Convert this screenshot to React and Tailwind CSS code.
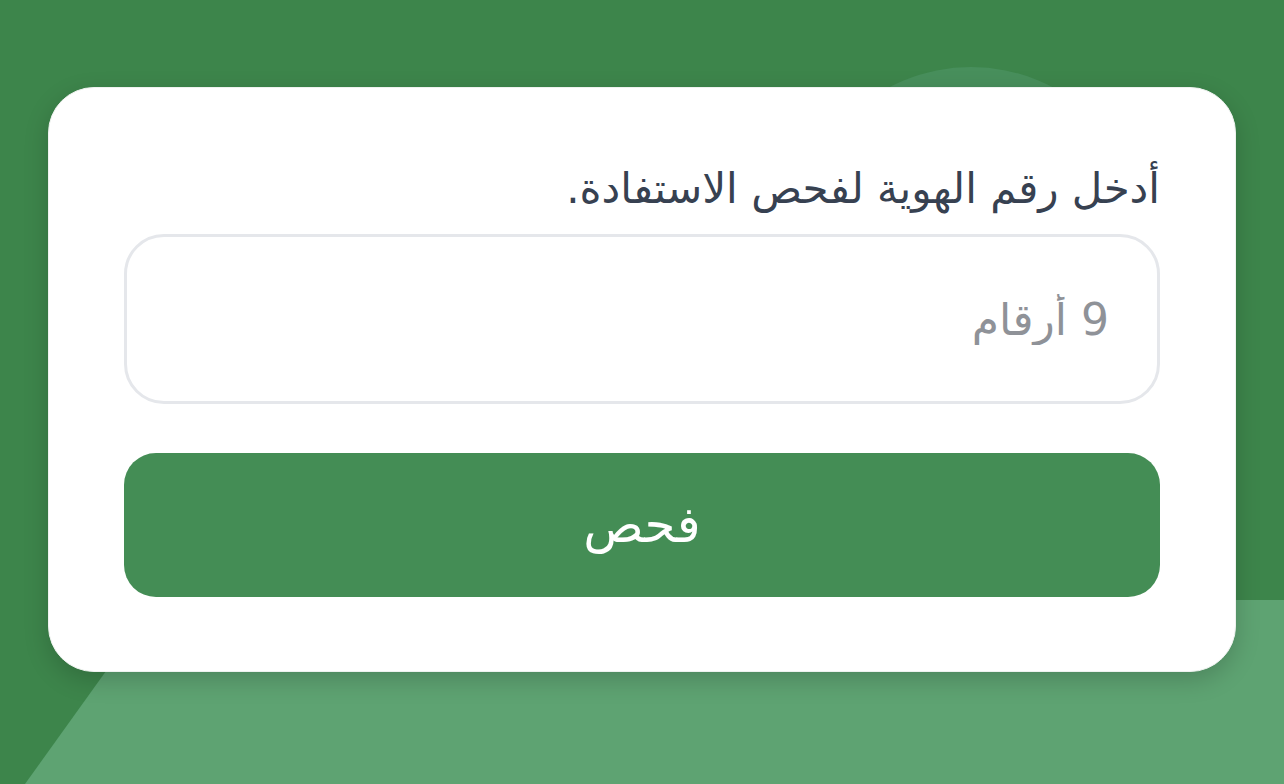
import React from 'react';

export default function App() {
  return (
    <div
      dir="rtl"
      className="relative w-full h-[784px] overflow-hidden bg-[#3d854b]"
      style={{ fontFamily: '"DejaVu Sans", "Noto Sans", sans-serif' }}
    >
      {/* decorative background shapes */}
      <div className="absolute left-[795px] top-[67px] w-[352px] h-[352px] rounded-full bg-[#488f5c]" />
      <div
        className="absolute left-0 top-[600px] w-full h-[184px] bg-[#5ea372]"
        style={{ clipPath: 'polygon(157px 0, 100% 0, 100% 100%, 25px 100%)' }}
      />

      <div className="relative pt-[87px] px-[48px]">
        <div className="bg-white rounded-[46px] border border-[#eef2ef] shadow-[0_8px_24px_rgba(0,0,0,0.18)] px-[75px] pt-[76px] pb-[74px]">
          <label className="block text-[42px] leading-[50px] text-[#374151] mb-[20px]">
            أدخل رقم الهوية لفحص الاستفادة.
          </label>
          <input
            type="text"
            placeholder="9 أرقام"
            className="block w-full h-[170px] rounded-[40px] border-[3px] border-[#e5e7eb] px-[48px] text-[44px] text-[#374151] placeholder:text-[#8f9298] outline-none"
          />
          <button className="mt-[49px] w-full h-[144px] rounded-[32px] bg-[#448d55] text-white text-[50px]">
            فحص
          </button>
        </div>
      </div>
    </div>
  );
}
